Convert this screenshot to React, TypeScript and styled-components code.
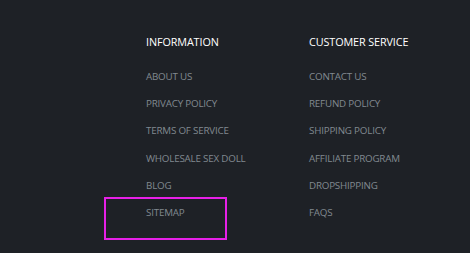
import styled, { createGlobalStyle } from "styled-components";

const GlobalStyle = createGlobalStyle`
  html, body {
    margin: 0;
    padding: 0;
    background: #1e2126;
  }
  body {
    font-family: "Open Sans", "Noto Sans", sans-serif;
  }
`;

const columns = [
  {
    title: "INFORMATION",
    links: ["ABOUT US", "PRIVACY POLICY", "TERMS OF SERVICE", "WHOLESALE SEX DOLL", "BLOG", "SITEMAP"],
  },
  {
    title: "CUSTOMER SERVICE",
    links: ["CONTACT US", "REFUND POLICY", "SHIPPING POLICY", "AFFILIATE PROGRAM", "DROPSHIPPING", "FAQS"],
  },
];

export default function App() {
  return (
    <Footer>
      <GlobalStyle />
      <Columns>
        {columns.map(col => (
          <Column key={col.title}>
            <Heading>{col.title}</Heading>
            <LinkList>
              {col.links.map(link => (
                <LinkItem key={link} $highlighted={link === "SITEMAP"}>
                  <FooterLink href="#">{link}</FooterLink>
                </LinkItem>
              ))}
            </LinkList>
          </Column>
        ))}
      </Columns>
    </Footer>
  );
}

const Footer = styled.footer`
  width: 470px;
  height: 253px;
  background: #1e2126;
  box-sizing: border-box;
  padding: 35px 0 0 146px;
  overflow: hidden;
`;

const Columns = styled.div`
  display: grid;
  grid-template-columns: 163px 163px;
`;

const Column = styled.div`
  display: flex;
  flex-direction: column;
`;

const Heading = styled.h4`
  margin: 0 0 21px;
  color: #ffffff;
  font-size: 10.8px;
  font-weight: 400;
  line-height: 14px;
  letter-spacing: -0.1px;
`;

const LinkList = styled.ul`
  list-style: none;
  margin: 0;
  padding: 0;
  display: flex;
  flex-direction: column;
  gap: 13.2px;
`;

const LinkItem = styled.li<{ $highlighted?: boolean }>`
  position: relative;
  font-size: 9.8px;
  line-height: 14px;

  ${p => p.$highlighted && `
    &::after {
      content: "";
      position: absolute;
      left: -42px;
      top: -9px;
      width: 119px;
      height: 39px;
      border: 2px solid #e620e6;
    }
  `}
`;

const FooterLink = styled.a`
  color: #818990;
  font-size: 9.8px;
  text-decoration: none;
  letter-spacing: -0.2px;
`;
